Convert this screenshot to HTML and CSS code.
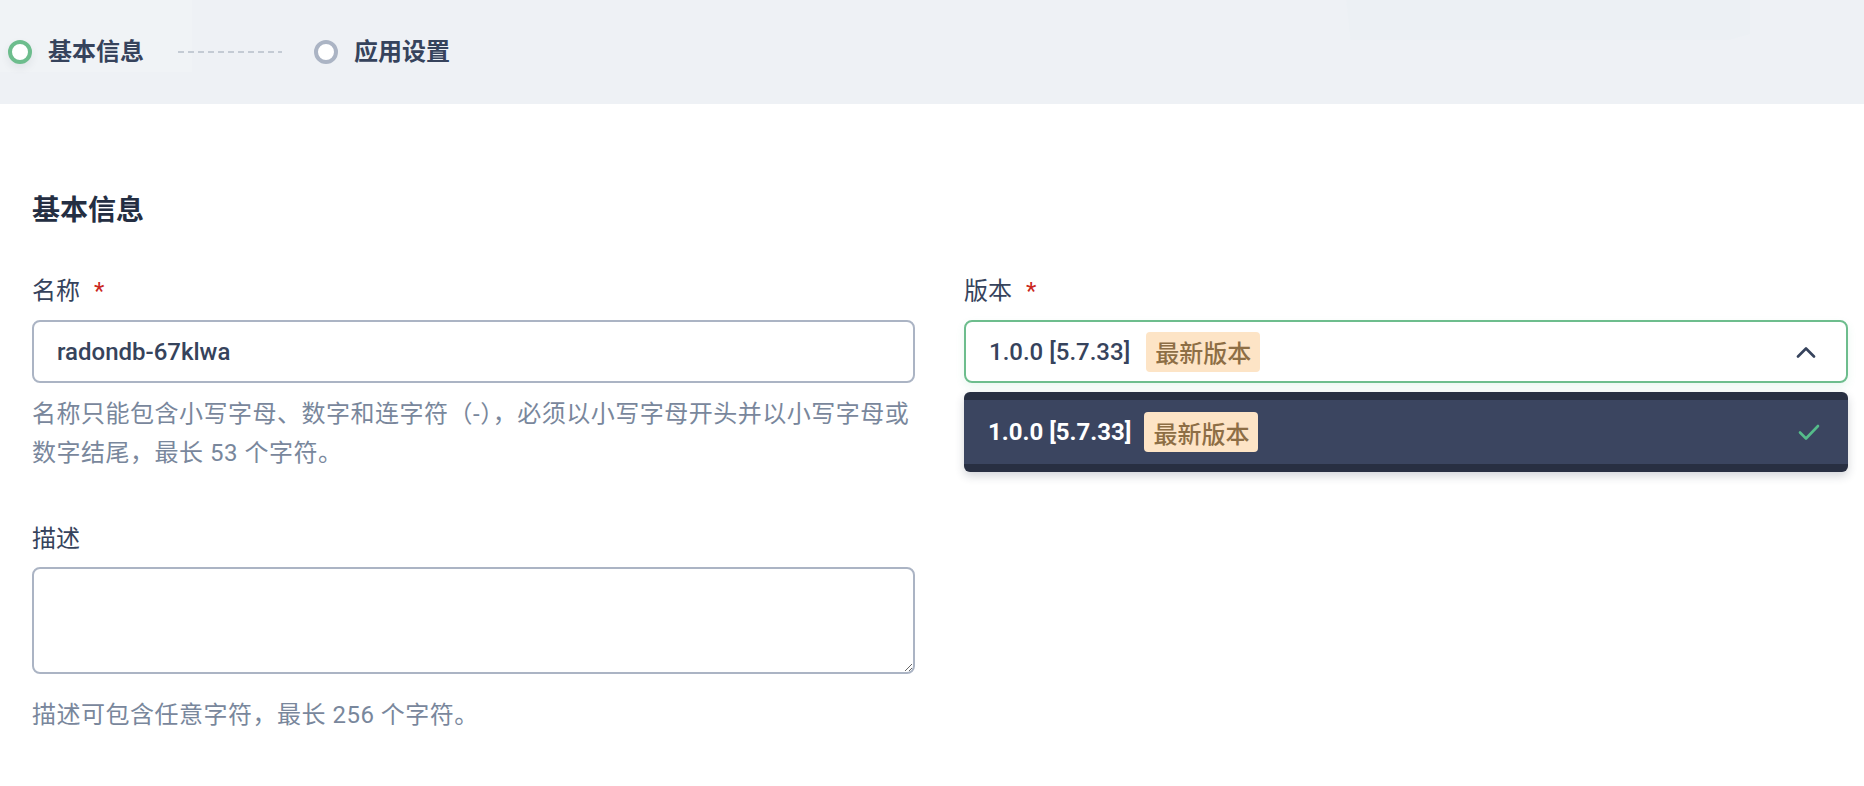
FILE: index.html
```html
<!DOCTYPE html>
<html lang="zh-CN">
<head>
<meta charset="utf-8">
<title>创建应用</title>
<link rel="stylesheet" href="styles.css">
</head>
<body>
<header class="steps">
  <span class="deco deco-a"></span>
  <span class="deco deco-b"></span>
  <div class="step step-active">
    <span class="step-dot"></span>
    <span class="step-text">基本信息</span>
  </div>
  <span class="step-line"></span>
  <div class="step">
    <span class="step-dot"></span>
    <span class="step-text">应用设置</span>
  </div>
</header>

<main class="content">
  <h2 class="section-title">基本信息</h2>
  <div class="form-grid">
    <div class="field">
      <label class="field-label">名称<span class="required">*</span></label>
      <div class="input">radondb-67klwa</div>
      <p class="hint">名称只能包含小写字母、数字和连字符（-），必须以小写字母开头并以小写字母或数字结尾，最长 53 个字符。</p>
    </div>
    <div class="field">
      <label class="field-label">版本<span class="required">*</span></label>
      <div class="select-wrap">
        <div class="select">
          <span class="select-value">1.0.0 [5.7.33]</span>
          <span class="badge">最新版本</span>
          <svg class="chevron" width="20" height="12" viewBox="0 0 20 12"><path d="M2 10.5 L10 2.5 L18 10.5" fill="none" stroke="#36435c" stroke-width="2.6" stroke-linecap="round" stroke-linejoin="round"/></svg>
        </div>
        <div class="dropdown">
          <div class="option">
            <span class="option-value">1.0.0 [5.7.33]</span>
            <span class="badge">最新版本</span>
            <svg class="check" width="22" height="18" viewBox="0 0 22 18"><path d="M2 9.5 L8 15.5 L20 3" fill="none" stroke="#55bc8a" stroke-width="2.6" stroke-linecap="round" stroke-linejoin="round"/></svg>
          </div>
        </div>
      </div>
    </div>
    <div class="field field-desc">
      <label class="field-label">描述</label>
      <textarea class="textarea"></textarea>
      <p class="hint hint-desc">描述可包含任意字符，最长 256 个字符。</p>
    </div>
  </div>
</main>
</body>
</html>
```

FILE: styles.css
```css
* { box-sizing: border-box; }

html, body {
  margin: 0;
  padding: 0;
  background: #ffffff;
  font-family: Roboto, "Noto Sans CJK SC", "Noto Sans", sans-serif;
  color: #36435c;
}

.steps {
  position: relative;
  overflow: hidden;
  height: 104px;
  background: #eef1f5;
  display: flex;
  align-items: center;
  padding-left: 8px;
}

.deco {
  position: absolute;
  pointer-events: none;
}
.deco-a {
  left: 0;
  top: 0;
  width: 192px;
  height: 72px;
  background: #f0f3f6;
}
.deco-b {
  left: 1325px;
  top: 0;
  width: 425px;
  height: 40px;
  background: #ecf0f4;
  clip-path: polygon(0 0, 100% 0, 100% 85%, 95% 100%, 6% 100%, 5% 0);
}

.step {
  position: relative;
  display: flex;
  align-items: center;
}

.step-dot {
  width: 24px;
  height: 24px;
  border-radius: 50%;
  border: 4px solid #abb4c4;
  background: #ffffff;
}

.step-active .step-dot {
  border-color: #6dbd8d;
  box-shadow: 0 4px 8px rgba(36, 46, 66, 0.08);
}

.step-text {
  margin-left: 16px;
  font-size: 24px;
  font-weight: 600;
  line-height: 32px;
  color: #36435c;
}

.step-line {
  position: relative;
  width: 104px;
  height: 2px;
  margin: 0 32px 0 34px;
  background-image: linear-gradient(to right, #c4cbd4 0, #c4cbd4 6px, transparent 6px);
  background-size: 10px 2px;
  background-repeat: repeat-x;
}

.content {
  padding: 87px 16px 0 32px;
}

.section-title {
  margin: 0;
  font-size: 28px;
  line-height: 40px;
  font-weight: 700;
  color: #242e42;
}

.form-grid {
  margin-top: 42px;
  display: grid;
  grid-template-columns: 883px 884px;
  column-gap: 49px;
}

.field-label {
  display: block;
  font-size: 24px;
  line-height: 36px;
  color: #36435c;
  margin-bottom: 11px;
}

.required {
  color: #ca2621;
  margin-left: 14px;
}

.input {
  height: 63px;
  border: 2px solid #abb4c4;
  border-radius: 8px;
  padding: 0 23px;
  display: flex;
  align-items: center;
  font-size: 24px;
  font-weight: 500;
  color: #36435c;
}

.hint {
  margin: 12px 0 0;
  font-size: 24px;
  line-height: 39px;
  letter-spacing: 0.5px;
  color: #79879c;
}

.select-wrap {
  position: relative;
}

.select {
  height: 63px;
  border: 2px solid #6dbd8d;
  border-radius: 8px;
  padding: 0 30px 0 23px;
  display: flex;
  align-items: center;
  box-shadow: 0 4px 8px rgba(85, 188, 138, 0.12);
}

.select-value {
  font-size: 24px;
  font-weight: 500;
  color: #36435c;
}

.badge {
  margin-left: 16px;
  height: 40px;
  padding: 0 9px;
  display: inline-flex;
  align-items: center;
  background: #fde4c6;
  color: #8d6e45;
  border-radius: 4px;
  font-size: 24px;
  font-weight: 500;
}

.chevron {
  margin-left: auto;
}

.dropdown {
  position: absolute;
  left: 0;
  right: 0;
  top: calc(100% + 9px);
  padding: 8px 0;
  background: #282f42;
  border-radius: 6px;
  box-shadow: 0 4px 10px rgba(36, 46, 66, 0.2);
  z-index: 2;
}

.option {
  height: 64px;
  background: #3b4560;
  display: flex;
  align-items: center;
  padding: 0 28px 0 24px;
}

.option-value {
  font-size: 24px;
  font-weight: 700;
  color: #ffffff;
}

.option .badge {
  margin-left: 13px;
}

.check {
  margin-left: auto;
}

.field-desc {
  grid-column: 1;
  margin-top: 48px;
}

.field-desc .field-label {
  margin-bottom: 10px;
}

.textarea {
  display: block;
  width: 100%;
  height: 107px;
  border: 2px solid #abb4c4;
  border-radius: 8px;
  resize: both;
  font-family: inherit;
  font-size: 24px;
  outline: none;
}

.hint-desc {
  margin-top: 22px;
}
```
